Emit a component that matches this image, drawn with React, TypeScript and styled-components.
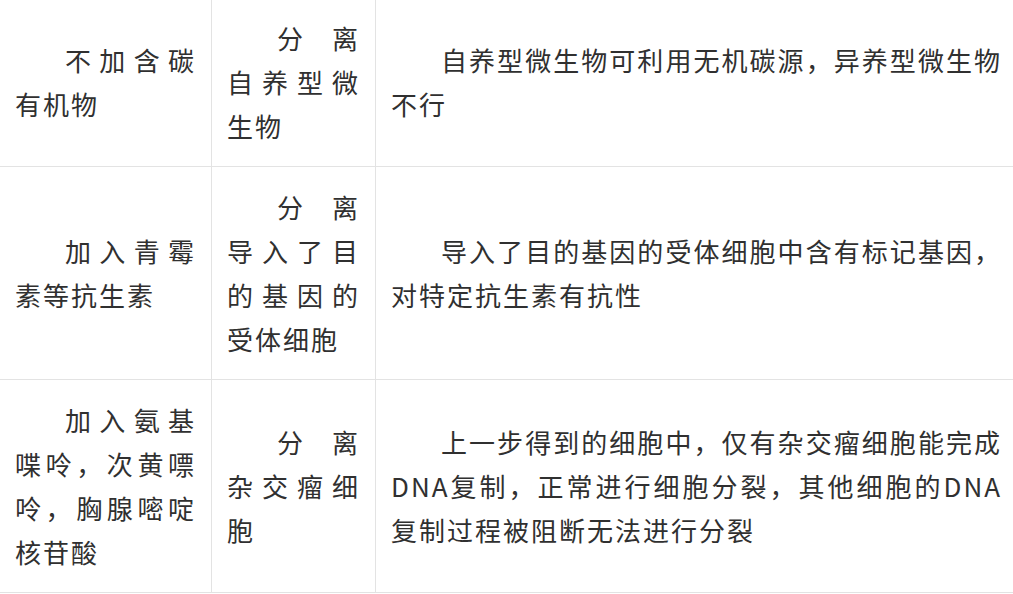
import React from 'react';
import styled, { createGlobalStyle } from 'styled-components';

const GlobalStyle = createGlobalStyle`
  html, body {
    margin: 0;
    padding: 0;
    background: #ffffff;
    overflow: hidden;
  }
`;

// three column grid, outer borders pushed just off the visible page
const Table = styled.div`
  display: grid;
  grid-template-columns: 212px 164px 642px;
  margin-top: -2px;
  width: 1018px;
  font-family: "Noto Sans CJK SC", "Noto Sans", sans-serif;
  font-size: 26px;
  letter-spacing: 2px;
  line-height: 44px;
  color: #303030;
`;

const Cell = styled.div`
  box-sizing: border-box;
  display: flex;
  align-items: center;
  padding: 18px 15px;
  border-right: 1px solid #e3e3e3;
  border-bottom: 1px solid #e3e3e3;
`;

const Para = styled.p`
  margin: 0;
  width: 100%;
  text-align: justify;
  text-indent: 50px;
`;

type Row = { medium: string; purpose: string; reason: string };

const rows: Row[] = [
  {
    medium: '不加含碳有机物',
    purpose: '分离自养型微生物',
    reason: '自养型微生物可利用无机碳源，异养型微生物不行',
  },
  {
    medium: '加入青霉素等抗生素',
    purpose: '分离导入了目的基因的受体细胞',
    reason: '导入了目的基因的受体细胞中含有标记基因，对特定抗生素有抗性',
  },
  {
    medium: '加入氨基喋呤，次黄嘌呤，胸腺嘧啶核苷酸',
    purpose: '分离杂交瘤细胞',
    reason: '上一步得到的细胞中，仅有杂交瘤细胞能完成DNA复制，正常进行细胞分裂，其他细胞的DNA复制过程被阻断无法进行分裂',
  },
];

const App: React.FC = () => {
  return (
    <>
      <GlobalStyle />
      <Table>
        {rows.map((row) => (
          <React.Fragment key={row.purpose}>
            <Cell>
              <Para>{row.medium}</Para>
            </Cell>
            <Cell>
              <Para>{row.purpose}</Para>
            </Cell>
            <Cell>
              <Para>{row.reason}</Para>
            </Cell>
          </React.Fragment>
        ))}
      </Table>
    </>
  );
};

export default App;
